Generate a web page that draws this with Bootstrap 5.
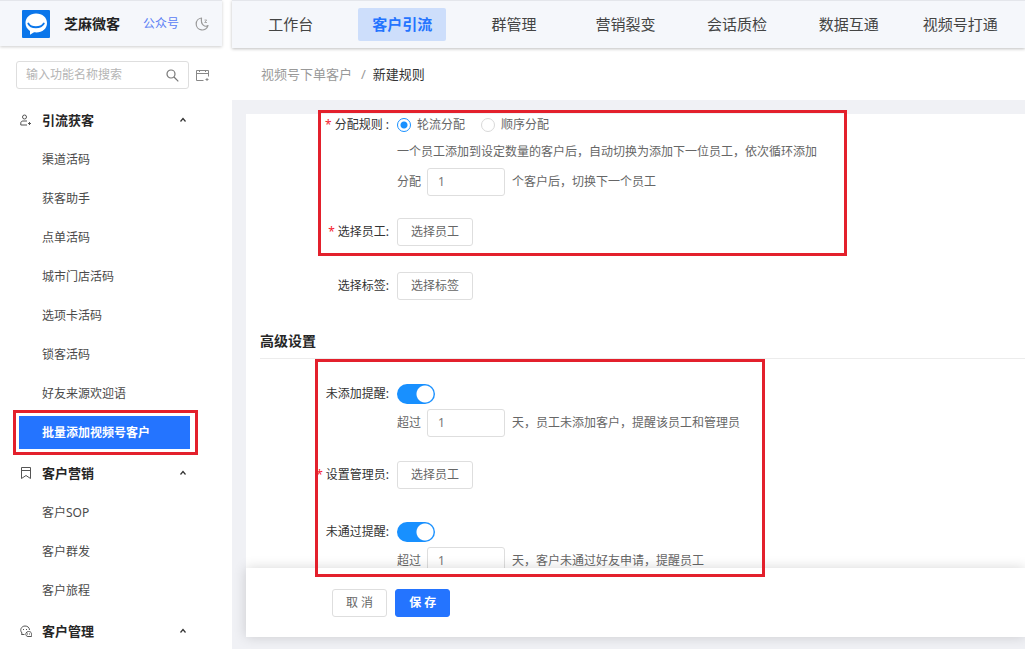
<!DOCTYPE html>
<html lang="zh-CN">
<head>
<meta charset="utf-8">
<meta name="viewport" content="width=device-width, initial-scale=1">
<title>新建规则 - 芝麻微客</title>
<link href="https://cdn.jsdelivr.net/npm/bootstrap@5.3.0/dist/css/bootstrap.min.css" rel="stylesheet">
<style>
  :root { --brand: #2474ff; --ink: #333; --soft: #666; --line: #dedede; --page: #f0f1f5; --bar: #f5f7fb; --alert: #e3202c; }
  body { font-family: "Noto Sans", "Noto Sans CJK SC", sans-serif; font-size: 12px; line-height: 22px; color: var(--soft); background: #fff; }
  a { color: inherit; text-decoration: none; }
  svg { display: block; flex: none; }

  .app-shell { height: 100vh; overflow: hidden; }
  .app-side { width: 232px; flex: none; }
  .side-head { height: 46px; margin-right: 10px; padding-left: 22px; background: var(--bar); border-top: 1px solid #e4e6eb; box-shadow: 0 1px 3px rgba(0,0,0,.2); }
  .brand-name { font-size: 14px; font-weight: 700; color: #222; margin: 0 23px 0 14px; }
  .brand-link { color: #5b80f5; margin-right: 16px; }

  .side-search { padding: 15px 22px 0 16px; gap: 7px; margin-bottom: 10px; }
  .search-box { width: 173px; height: 28px; border: 1px solid var(--line); border-radius: 3px; padding: 0 9px; }
  .search-box input { border: 0; padding: 0; font-size: 12px; line-height: 22px; color: var(--soft); box-shadow: none !important; }
  .search-box input::placeholder { color: #b5b5b5; }

  .menu-head { width: 100%; height: 41px; padding: 0 45px 0 20px; border: 0; background: none; font-size: 13px; font-weight: 700; color: #262626; gap: 10px; }
  .menu-item { display: block; height: 33px; line-height: 33px; margin: 3px 42px 3px 19px; padding-left: 23px; color: #4a4a4a; }
  .menu-item.active { background: var(--brand); color: #fff; font-weight: 700; position: relative; }

  /* Red frames drawn over the parts the guide talks about */
  .callout { position: absolute; border: 3px solid var(--alert); pointer-events: none; z-index: 3; }
  .callout-menu { inset: -6px -8px -6px -6px; }
  .callout-rule { left: 72px; top: -4px; width: 529px; height: 146px; }
  .callout-adv { left: 69px; top: 0; width: 450px; height: 218px; }

  .app-main { min-width: 0; background: var(--page); }
  .top-nav { height: 48px; padding: 0 9px 0 3px; background: var(--bar); border-top: 1px solid #e4e6eb; box-shadow: 0 1px 3px rgba(0,0,0,.25); z-index: 1; }
  .top-nav .nav-item { flex: 1 0 0; text-align: center; }
  .top-nav .nav-link { display: inline-block; height: 33px; line-height: 33px; padding: 0 14px; font-size: 15px; color: #444; border-radius: 2px; white-space: nowrap; }
  .top-nav .nav-link.active { background: #cddefb; color: var(--brand); font-weight: 700; }

  .crumbs { height: 52px; padding-left: 29px; background: #fff; font-size: 13px; color: #999; }
  .crumbs .breadcrumb-item + .breadcrumb-item { padding-left: 9px; }
  .crumbs .breadcrumb-item + .breadcrumb-item::before { color: #999; padding-right: 7px; }
  .crumbs .breadcrumb-item.active { color: var(--ink); }

  .form-panel { margin: 14px 0 0 14px; background: #fff; min-height: 0; }
  .form-line { display: flex; align-items: flex-start; }
  .form-line + .form-line { margin-top: 22px; }
  .adv-block .form-line + .form-line { margin-top: 24px; }
  .line-label { width: 143px; flex: none; text-align: right; margin-right: 8px; color: var(--ink); }
  .line-label.tall { line-height: 28px; }
  .must::before { content: "*"; color: #f5222d; margin-right: 3px; }
  .line-body { display: flex; flex-direction: column; align-items: flex-start; gap: 5px; }
  .inline-row { display: flex; align-items: center; line-height: 28px; }
  .num-input { width: 78px; height: 28px; padding: 0 10px; margin: 0 7px 0 6px; border: 1px solid var(--line); border-radius: 3px; font-size: 12px; color: #777; }
  .plain-btn { height: 28px; padding: 0 13px; border: 1px solid var(--line); border-radius: 3px; background: #fff; color: var(--soft); font-size: 12px; line-height: 26px; }
  .plain-btn.primary { background: var(--brand); border-color: var(--brand); color: #fff; font-weight: 700; }

  .form-check-input.dot { width: 14px; height: 14px; margin: 0 6px 0 0; float: none; border: 1px solid #d9d9d9; }
  .form-check-input.dot:checked { border-color: #1890ff; background: radial-gradient(circle, #1890ff 3px, #fff 4px); }
  .form-check-input.toggle { display: block; width: 38px; height: 20px; margin: 1px 0 0; border: 0; border-radius: 10px; background: #1890ff radial-gradient(circle at 28px 10px, #fff 8px, transparent 9px); }

  .tag-line { margin-top: 26px; }
  .adv-title { font-size: 14px; font-weight: 700; line-height: 22px; color: #262626; margin: 30px 0 0 14px; padding-bottom: 6px; border-bottom: 1px solid #ececec; }
  .adv-block { padding-top: 24px; }

  .action-bar { height: 69px; margin: 0 0 12px 14px; padding-left: 86px; gap: 8px; background: #fff; box-shadow: 0 0 12px rgba(0,0,0,.16); position: relative; z-index: 2; }
</style>
</head>
<body>
<div class="app-shell d-flex">

  <aside class="app-side">
    <div class="side-head d-flex align-items-center">
      <svg width="28" height="28" viewBox="0 0 28 28" aria-hidden="true">
        <rect width="28" height="28" rx="1" fill="#0b76ea"/>
        <path d="M14 3.500C8 3.500 3.500 7.500 3.500 13c0 3.300 1.500 6 4.500 8v3.800l4-2.500c7.500 1 13-3 13-9.300C25 7.500 20.500 3.500 14 3.500Z" fill="#fff"/>
        <path d="M6.300 13.500c2.500 5 12.500 5 15.500 0" fill="none" stroke="#0b76ea" stroke-width="1.800" stroke-linecap="round"/>
      </svg>
      <span class="brand-name">芝麻微客</span>
      <a class="brand-link" href="#">公众号</a>
      <svg width="14" height="14" viewBox="0 0 14 14" fill="none" stroke="#999" stroke-width="1.200" stroke-linejoin="round" aria-hidden="true"><path d="M6.500 1A6 6 0 1 0 13 8.500C10 10.500 5.500 8 6.500 1Z"/><path d="M9.500 3h2.200L9.700 5.500H12" stroke-width=".8"/></svg>
    </div>

    <div class="side-search d-flex align-items-center">
      <label class="search-box d-flex align-items-center" for="search">
        <input id="search" class="form-control" type="text" placeholder="输入功能名称搜索" aria-label="输入功能名称搜索">
        <svg width="13" height="13" viewBox="0 0 13 13" fill="none" stroke="#777" stroke-width="1.200" aria-hidden="true"><circle cx="5" cy="5" r="4"/><path d="m8 8 4.300 4.300"/></svg>
      </label>
      <svg width="13" height="13" viewBox="0 0 13 13" fill="none" stroke="#888" aria-hidden="true"><path d="M7.500 11.500h-7v-10h12v6M.5 4.500h12M3.500 1v2M9.500 1v2M11 9v3M9.500 10.500h3"/></svg>
    </div>

    <nav class="d-flex flex-column" aria-label="功能菜单">
      <button type="button" class="menu-head d-flex align-items-center">
        <svg width="12" height="12" viewBox="0 0 12 12" fill="none" stroke="#555" aria-hidden="true"><circle cx="4.500" cy="3" r="2"/><path d="M7 11H.8V9c0-1.300.9-2 2.200-2h4M9.500 8v3M8 9.500h3"/></svg>
        引流获客
        <svg class="ms-auto" width="8" height="6" viewBox="0 0 8 6" fill="none" stroke="#333" stroke-width="1.200" aria-hidden="true"><path d="m1.500 4.500 2.500-3 2.500 3"/></svg>
      </button>
      <a class="menu-item" href="#">渠道活码</a>
      <a class="menu-item" href="#">获客助手</a>
      <a class="menu-item" href="#">点单活码</a>
      <a class="menu-item" href="#">城市门店活码</a>
      <a class="menu-item" href="#">选项卡活码</a>
      <a class="menu-item" href="#">锁客活码</a>
      <a class="menu-item" href="#">好友来源欢迎语</a>
      <a class="menu-item active" href="#" aria-current="page">批量添加视频号客户<span class="callout callout-menu"></span></a>
      <button type="button" class="menu-head d-flex align-items-center">
        <svg width="12" height="12" viewBox="0 0 12 12" fill="none" stroke="#555" aria-hidden="true"><path d="M1.500.5h9v11L6 8.500l-4.500 3ZM1.500 3.500h9"/></svg>
        客户营销
        <svg class="ms-auto" width="8" height="6" viewBox="0 0 8 6" fill="none" stroke="#333" stroke-width="1.200" aria-hidden="true"><path d="m1.500 4.500 2.500-3 2.500 3"/></svg>
      </button>
      <a class="menu-item" href="#">客户SOP</a>
      <a class="menu-item" href="#">客户群发</a>
      <a class="menu-item" href="#">客户旅程</a>
      <button type="button" class="menu-head d-flex align-items-center">
        <svg width="12" height="12" viewBox="0 0 12 12" fill="none" stroke="#555" aria-hidden="true"><path d="M4.500 9.500H1.500L2 8C-.8 5 1.500 1 5 1c2.500 0 4.500 1.500 4.500 4M3.500 4v1M6.500 4v1"/><path d="M11.500 11.500H8c-3 0-3-5 .5-5s3 2.500 3 5ZM7.500 8.500v1M9.500 8.500v1"/></svg>
        客户管理
        <svg class="ms-auto" width="8" height="6" viewBox="0 0 8 6" fill="none" stroke="#333" stroke-width="1.200" aria-hidden="true"><path d="m1.500 4.500 2.500-3 2.500 3"/></svg>
      </button>
    </nav>
  </aside>

  <main class="app-main flex-grow-1 d-flex flex-column">
    <ul class="top-nav nav flex-nowrap align-items-center flex-shrink-0">
      <li class="nav-item"><a class="nav-link" href="#">工作台</a></li>
      <li class="nav-item"><a class="nav-link active" href="#">客户引流</a></li>
      <li class="nav-item"><a class="nav-link" href="#">群管理</a></li>
      <li class="nav-item"><a class="nav-link" href="#">营销裂变</a></li>
      <li class="nav-item"><a class="nav-link" href="#">会话质检</a></li>
      <li class="nav-item"><a class="nav-link" href="#">数据互通</a></li>
      <li class="nav-item"><a class="nav-link" href="#">视频号打通</a></li>
    </ul>

    <nav class="crumbs d-flex align-items-center flex-shrink-0" aria-label="breadcrumb">
      <ol class="breadcrumb m-0">
        <li class="breadcrumb-item"><a href="#">视频号下单客户</a></li>
        <li class="breadcrumb-item active" aria-current="page">新建规则</li>
      </ol>
    </nav>

    <form class="flex-grow-1 d-flex flex-column overflow-hidden">
      <div class="form-panel flex-grow-1">
        <div class="position-relative">
          <div class="form-line">
            <span class="line-label must">分配规则 :</span>
            <div class="line-body">
              <div class="d-flex align-items-center">
                <input class="form-check-input dot" type="radio" name="mode" id="modeTurn" checked>
                <label for="modeTurn">轮流分配</label>
                <input class="form-check-input dot ms-3" type="radio" name="mode" id="modeOrder">
                <label for="modeOrder">顺序分配</label>
              </div>
              <div>一个员工添加到设定数量的客户后，自动切换为添加下一位员工，依次循环添加</div>
              <div class="inline-row">
                <label for="perCount">分配</label>
                <input class="num-input" id="perCount" type="text" value="1">
                <span>个客户后，切换下一个员工</span>
              </div>
            </div>
          </div>
          <div class="form-line">
            <label class="line-label tall must" for="pickStaff">选择员工:</label>
            <button type="button" class="plain-btn" id="pickStaff">选择员工</button>
          </div>
          <span class="callout callout-rule"></span>
        </div>
        <div class="form-line tag-line">
          <label class="line-label tall" for="pickTag">选择标签:</label>
          <button type="button" class="plain-btn" id="pickTag">选择标签</button>
        </div>

        <h2 class="adv-title">高级设置</h2>
        <div class="adv-block position-relative">
          <div class="form-line">
            <label class="line-label" for="swAdd">未添加提醒:</label>
            <div class="line-body">
              <input class="form-check-input toggle" type="checkbox" role="switch" id="swAdd" checked>
              <div class="inline-row">
                <label for="addDays">超过</label>
                <input class="num-input" id="addDays" type="text" value="1">
                <span>天，员工未添加客户，提醒该员工和管理员</span>
              </div>
            </div>
          </div>
          <div class="form-line">
            <label class="line-label tall must" for="pickAdmin">设置管理员:</label>
            <button type="button" class="plain-btn" id="pickAdmin">选择员工</button>
          </div>
          <div class="form-line pt-2">
            <label class="line-label" for="swPass">未通过提醒:</label>
            <div class="line-body">
              <input class="form-check-input toggle" type="checkbox" role="switch" id="swPass" checked>
              <div class="inline-row">
                <label for="passDays">超过</label>
                <input class="num-input" id="passDays" type="text" value="1">
                <span>天，客户未通过好友申请，提醒员工</span>
              </div>
            </div>
          </div>
          <span class="callout callout-adv"></span>
        </div>
      </div>

      <div class="action-bar d-flex align-items-center flex-shrink-0">
        <button type="button" class="plain-btn">取 消</button>
        <button type="submit" class="plain-btn primary">保 存</button>
      </div>
    </form>
  </main>
</div>
<script src="https://cdn.jsdelivr.net/npm/bootstrap@5.3.0/dist/js/bootstrap.bundle.min.js"></script>
</body>
</html>
